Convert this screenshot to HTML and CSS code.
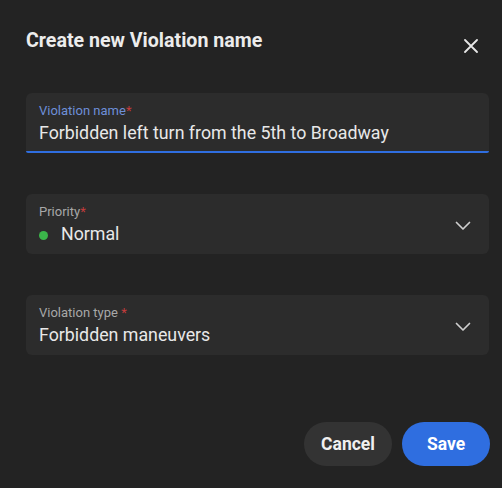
FILE: index.html
```html
<!DOCTYPE html>
<html>
<head>
<meta charset="utf-8">
<link rel="stylesheet" href="styles.css">
</head>
<body>
<div class="dialog">
  <div class="header">
    <h1 class="title">Create new Violation name</h1>
    <button class="close" aria-label="Close">
      <svg width="14" height="14" viewBox="0 0 14 14"><path d="M1 1 L13 13 M13 1 L1 13" stroke="#e6e6e6" stroke-width="1.8" stroke-linecap="round" fill="none"/></svg>
    </button>
  </div>
  <div class="fields">
    <div class="field focused">
      <div class="field-body">
        <div class="label blue">Violation name<span class="req">*</span></div>
        <div class="value">Forbidden left turn from the 5th to Broadway</div>
      </div>
    </div>
    <div class="field">
      <div class="field-body">
        <div class="label">Priority<span class="req">*</span></div>
        <div class="value"><span class="dot"></span>Normal</div>
      </div>
      <svg class="chev" width="16" height="10" viewBox="0 0 16 10"><path d="M1.5 1.5 L8 8 L14.5 1.5" stroke="#cfcfcf" stroke-width="1.7" fill="none" stroke-linecap="round" stroke-linejoin="round"/></svg>
    </div>
    <div class="field">
      <div class="field-body">
        <div class="label">Violation type <span class="req">*</span></div>
        <div class="value">Forbidden maneuvers</div>
      </div>
      <svg class="chev" width="16" height="10" viewBox="0 0 16 10"><path d="M1.5 1.5 L8 8 L14.5 1.5" stroke="#cfcfcf" stroke-width="1.7" fill="none" stroke-linecap="round" stroke-linejoin="round"/></svg>
    </div>
  </div>
  <div class="actions">
    <button class="btn cancel">Cancel</button>
    <button class="btn save">Save</button>
  </div>
</div>
</body>
</html>
```
FILE: styles.css
```css
html, body {
  margin: 0;
  padding: 0;
  background: #232323;
  height: 100%;
}
body {
  font-family: Roboto, "Liberation Sans", sans-serif;
  color: #e8e8e8;
}
.dialog {
  padding: 28px 12px 0 26px;
  display: flex;
  flex-direction: column;
}
.header {
  display: flex;
  justify-content: space-between;
  align-items: flex-start;
}
.title {
  margin: 0;
  font-size: 19.6px;
  line-height: 26px;
  font-weight: 700;
  color: #ececec;
}
.close {
  background: none;
  border: none;
  padding: 0;
  margin: 11px 12px 0 0;
  width: 14px;
  height: 14px;
  display: flex;
}
.fields {
  margin-top: 39px;
  display: flex;
  flex-direction: column;
  gap: 41px;
}
.field {
  background: #2c2c2c;
  border-radius: 6px;
  height: 60px;
  box-sizing: border-box;
  padding: 9px 18px 0 13px;
  display: flex;
  justify-content: space-between;
  align-items: flex-start;
  margin-right: 1px;
}
.field.focused {
  border-bottom: 2px solid #2f6ee0;
  border-radius: 6px 6px 2px 2px;
}
.label {
  font-size: 13px;
  line-height: 17px;
  color: #a8a8a8;
}
.label.blue {
  color: #6e8fd8;
}
.req {
  color: #c43c3c;
}
.value {
  font-size: 17.8px;
  line-height: 24px;
  margin-top: 2px;
  color: #e8e8e8;
  display: flex;
  align-items: center;
}
.dot {
  width: 9px;
  height: 9px;
  border-radius: 50%;
  background: #3bb54a;
  margin: 3px 13px 0 0;
}
.chev {
  margin-top: 18px;
}
.actions {
  margin-top: 67px;
  display: flex;
  justify-content: flex-end;
  gap: 10px;
}
.btn {
  height: 44px;
  width: 88px;
  border-radius: 22px;
  border: none;
  font-family: Roboto, "Liberation Sans", sans-serif;
  font-size: 17.5px;
  font-weight: 700;
  color: #f0f0f0;
}
.cancel {
  background: #333333;
}
.save {
  background: #2f6ee0;
  color: #ffffff;
}
```
